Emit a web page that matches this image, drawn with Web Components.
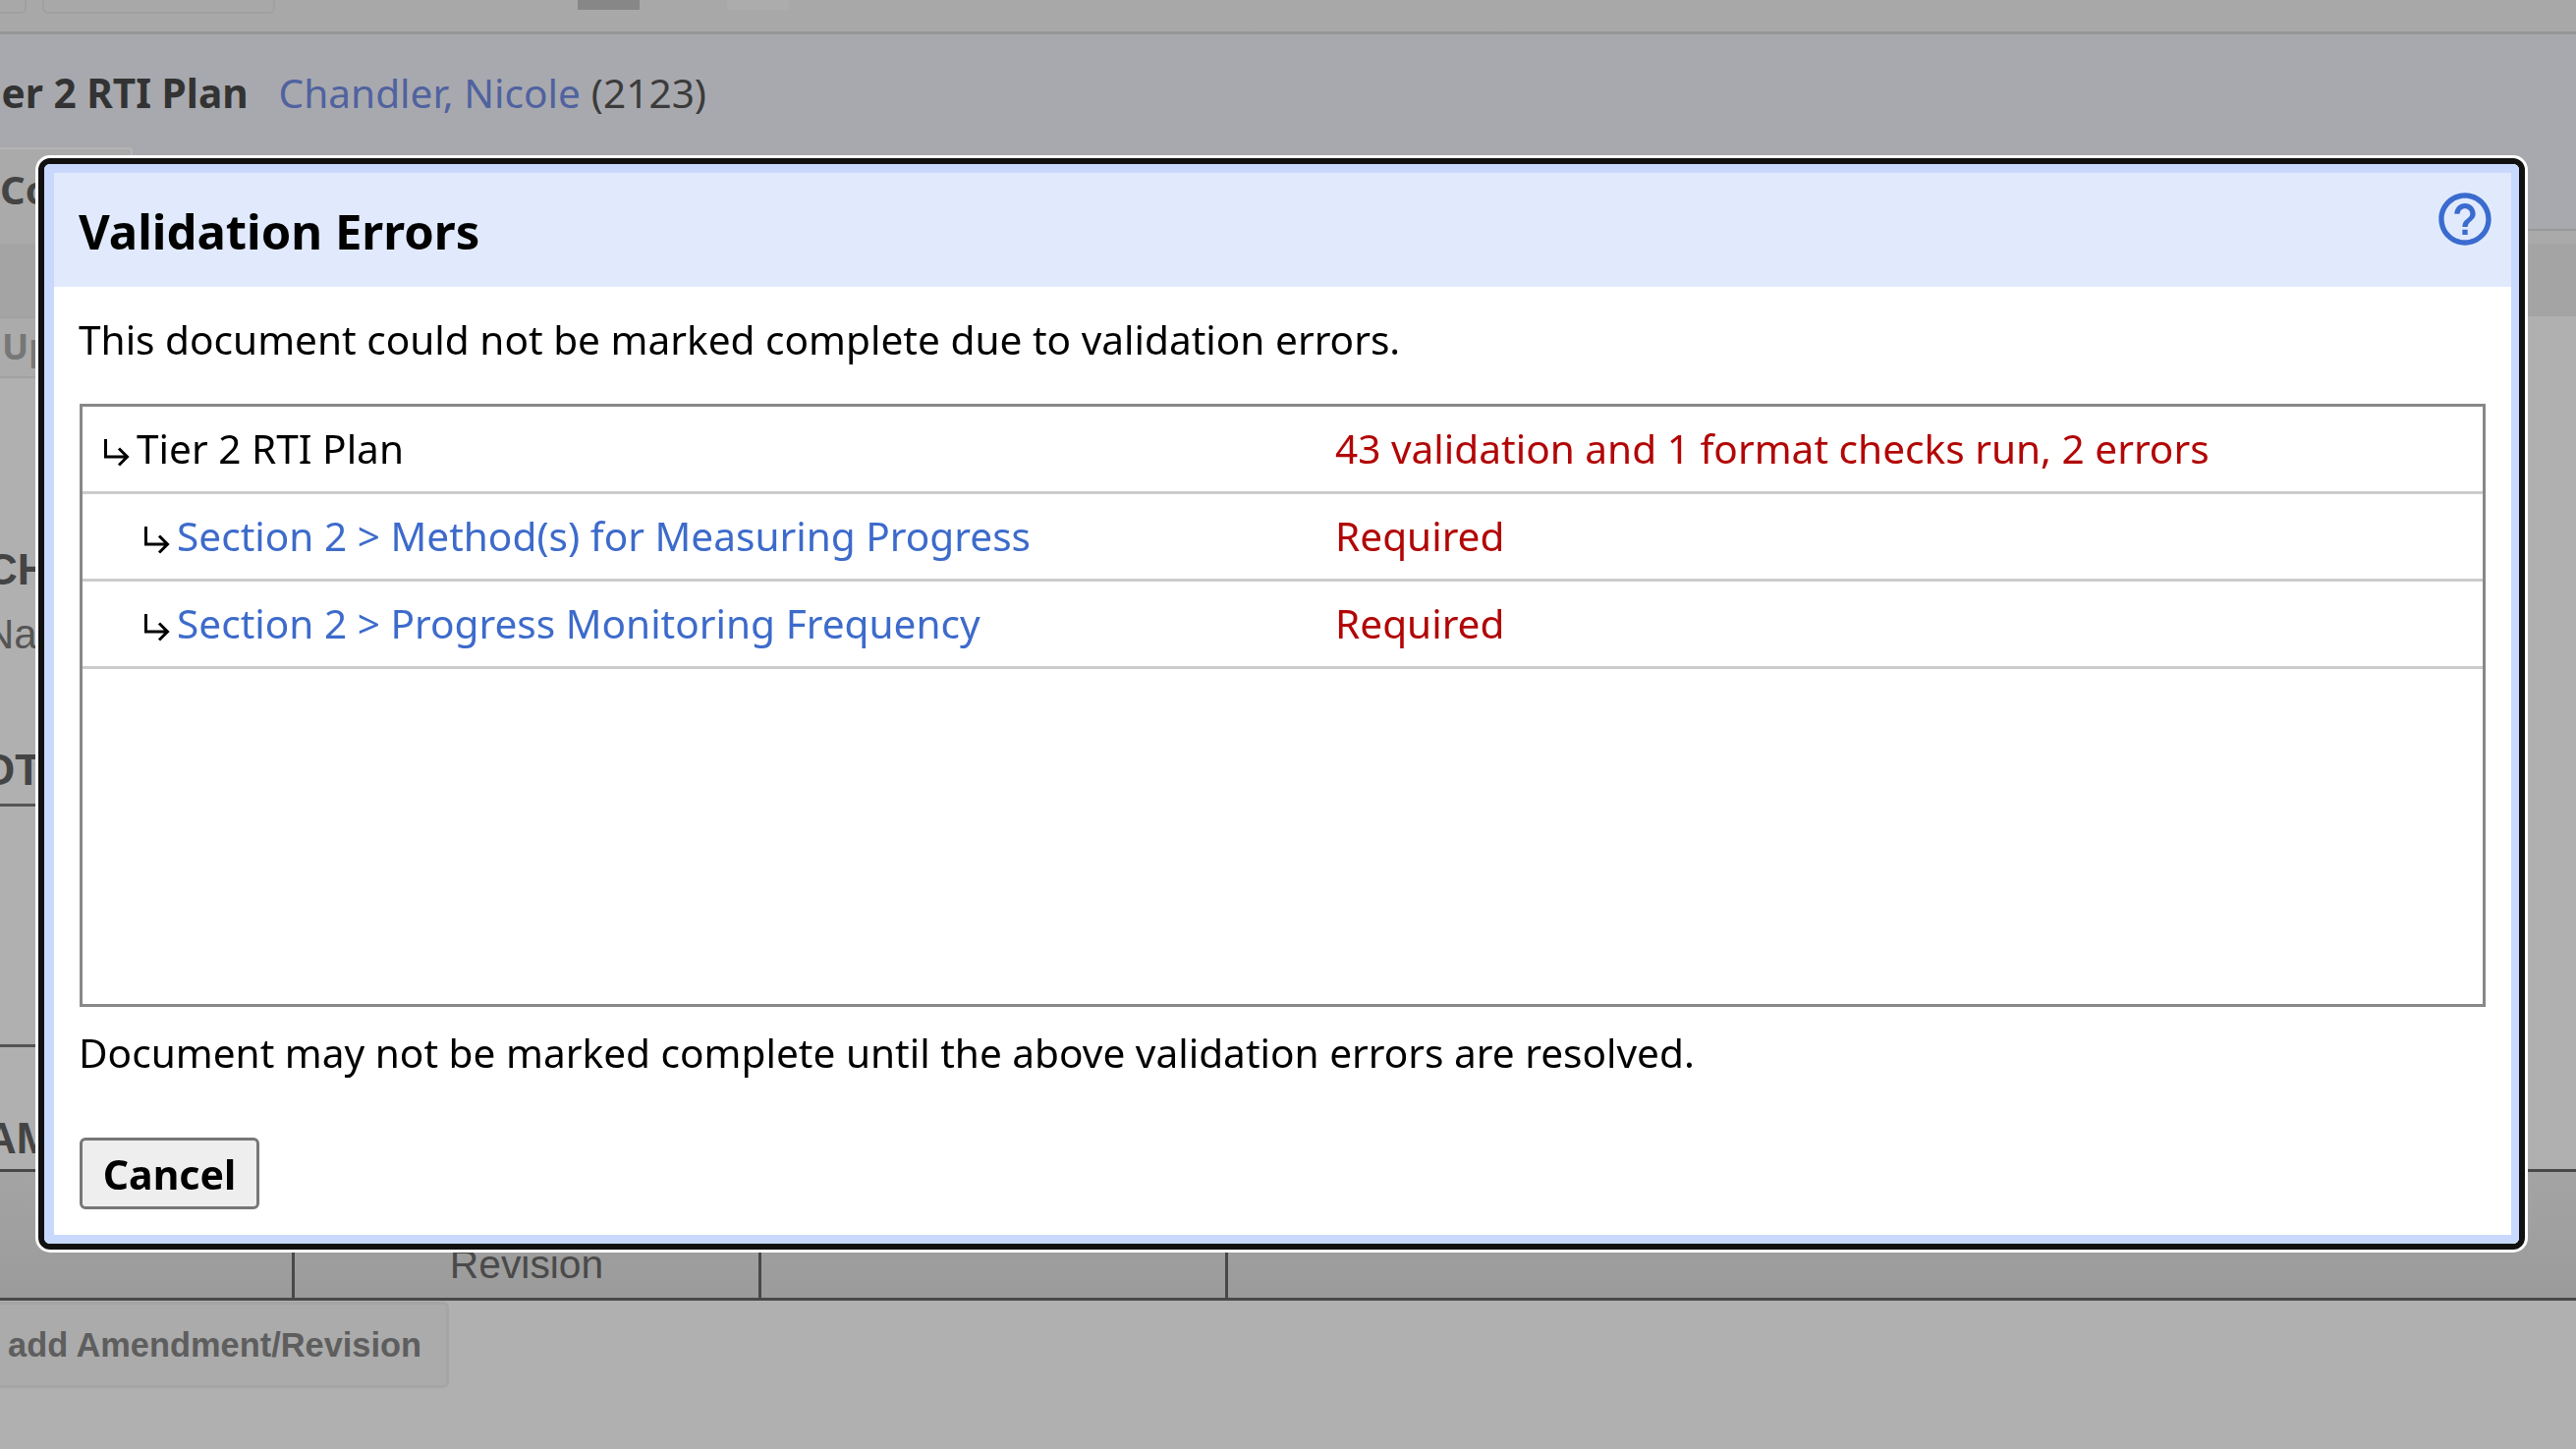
<!DOCTYPE html>
<html lang="en"><head><meta charset="utf-8"><title>Validation Errors</title>
<style>
html,body{margin:0;padding:0;width:2622px;height:1475px;overflow:hidden;background:#b0b0b0;font-family:"Noto Sans",sans-serif}
</style></head>
<body>
<app-page>
  <top-bar></top-bar>
  <student-head name="Chandler, Nicole" num="(2123)">Tier 2 RTI Plan</student-head>
  <doc-tabs></doc-tabs>
  <doc-content></doc-content>
</app-page>
<validation-dialog heading="Validation Errors">
  <span slot="intro">This document could not be marked complete due to validation errors.</span>
  <check-row level="0" status="43 validation and 1 format checks run, 2 errors">Tier 2 RTI Plan</check-row>
  <check-row level="1" link status="Required">Section 2 &gt; Method(s) for Measuring Progress</check-row>
  <check-row level="1" link status="Required">Section 2 &gt; Progress Monitoring Frequency</check-row>
  <span slot="outro">Document may not be marked complete until the above validation errors are resolved.</span>
</validation-dialog>
<script>
const el=(name,html,extra)=>customElements.define(name,class extends HTMLElement{
  constructor(){super();this.attachShadow({mode:'open'}).innerHTML=html;}
  connectedCallback(){extra&&extra(this)}
});
el('app-page',`<style>:host{display:flex;flex-direction:column;width:2622px;height:1475px;overflow:hidden;background:#b0b0b0}</style><slot></slot>`);
el('top-bar',`<style>
:host{display:flex;height:32px;background:linear-gradient(#a8a8a8,#a9a9a9);border-bottom:3px solid #969696;align-items:flex-start;position:relative;flex:none}
.b{height:14px;box-sizing:border-box;border:2px solid #a0a0a0;border-top:0;border-radius:0 0 6px 6px}
.r{height:10px}
</style>
<div class="b" style="width:27px;border-left:0;border-radius:0 0 6px 0"></div>
<div class="b" style="width:237px;margin-left:16px"></div>
<div class="r" style="width:63px;margin-left:308px;background:#878787"></div>
<div class="r" style="width:63px;margin-left:89px;background:#acacac"></div>`);
el('student-head',`<style>
:host{display:flex;box-sizing:border-box;height:198px;flex:none;background:#a8a9ae;padding-top:33px;align-items:flex-start;font:40.6px/54px "Noto Sans",sans-serif;color:#3b3b3b;white-space:nowrap;position:relative}
b{margin-left:-34px;font-weight:700;color:#333}
a{margin-left:31px;color:#50629f}
i{font-style:normal;margin-left:11px}
</style><b><slot></slot></b><a id="n"></a><i id="m"></i>`,h=>{
 h.shadowRoot.getElementById('n').textContent=h.getAttribute('name');
 h.shadowRoot.getElementById('m').textContent=h.getAttribute('num');});
el('doc-tabs',`<style>
:host{display:block;flex:none;height:87px;position:relative;background:linear-gradient(#aaa 0 13px,#a4a4a4 13px);border-top:2px solid #989898;box-sizing:content-box;font:700 40px/50px "Noto Sans",sans-serif;color:#444}
.tab{position:absolute;left:0;top:-85px;width:135px;height:98px;box-sizing:border-box;border:solid #b4b4b4;border-width:2px 2px 0 0;background:#aaa;padding:16px 0 0 0;border-radius:0 4px 0 0}
</style><div class="tab">Co</div>`);
el('doc-content',`<style>
:host{display:block;flex:1;background:#b0b0b0;font-family:"Liberation Sans",sans-serif;white-space:nowrap;color:#444;overflow:hidden}
.up{box-sizing:border-box;height:63px;width:800px;border:solid #a1a1a1;border-width:2px 0;background:#ababab;font:700 36px/58px "Noto Sans",sans-serif;color:#777;padding-left:2px}
.h{font-weight:700;font-size:44px;line-height:32px;height:32px;color:#444}
.ch{margin:179px 0 0 -14px}
.na{margin:34px 0 0 -16px;font-size:42px;font-weight:400;color:#555}
.ot{margin:107px 0 0 0;width:1000px;padding-bottom:19px;border-bottom:3px solid #555;box-sizing:content-box;height:30px;line-height:30px;text-indent:-19px}
.rule{margin-top:242px;width:1000px;border-top:3px solid #555}
.am{margin-top:78px;height:30px;line-height:30px;padding-bottom:16px;text-indent:-15px}
.t{display:grid;grid-template-columns:297px 475px 475px 1fr;height:128px;border:solid #484848;border-width:3px 0;background:linear-gradient(#a4a4a4,#9b9b9b)}
.t div{border-left:3px solid #484848;box-sizing:border-box;display:flex;align-items:flex-end;justify-content:center;font-size:40.8px;line-height:46px;padding-bottom:11px;color:#4a4a4a}
.t div:first-child{border-left:0}
.add{display:inline-block;box-sizing:border-box;margin-top:1px;height:88px;width:457px;border:3px solid #a5a5a5;border-left:0;border-radius:0 6px 6px 0;background:#ababab;font-weight:700;font-size:34.4px;line-height:82px;color:#5e5e5e;padding-left:8px}
</style>
<div class="up">Up</div>
<div class="h ch">CH</div>
<div class="h na">Na</div>
<div class="h ot">OT</div>
<div class="rule"></div>
<div class="h am">AM</div>
<div class="t"><div></div><div>Revision</div><div></div><div></div></div>
<div class="add">add Amendment/Revision</div>`);
el('validation-dialog',`<style>
:host{position:fixed;left:39px;top:161px;width:2531px;height:1111px;box-sizing:border-box;border:6.5px solid #111;border-radius:12px;box-shadow:0 0 0 3px #fff;background:#c9d9fd;font:40.6px/54px "Noto Sans",sans-serif;color:#000;display:block;overflow:hidden}
.in{box-sizing:border-box;height:100%;margin:0;border:solid #c9d9fd;border-width:9px 8px 9px 10px;background:#fff;display:flex;flex-direction:column}
header{display:flex;justify-content:space-between;height:116px;flex:none;background:#e1eafd;padding:0 15px 0 25px;box-sizing:border-box}
h1{margin:0;font-size:49px;line-height:66px;font-weight:700;padding-top:26px}
svg{margin-top:15px;display:block}
main{flex:1;display:flex;flex-direction:column;padding:27px 26px 26px 25px;min-height:0}
.tb{margin:38px 0 0 1px;height:614px;box-sizing:border-box;border:3px solid #888;flex:none}
.ou{margin-top:20px}
button{margin:59px 0 0 1px;width:183px;height:75px;box-sizing:border-box;border:3px solid #777;border-radius:6px;background:#eee;font:700 41px/54px "Noto Sans",sans-serif;color:#000;padding:0;display:block}
</style>
<div class="in">
<header><h1 id="t"></h1><svg width="64" height="64" viewBox="0 0 24 24" fill="#3a6bcf"><path d="M11 18h2v-2h-2v2zm1-16C6.48 2 2 6.48 2 12s4.48 10 10 10 10-4.48 10-10S17.52 2 12 2zm0 18c-4.41 0-8-3.59-8-8s3.59-8 8-8 8 3.59 8 8-3.59 8-8 8zm0-14c-2.21 0-4 1.79-4 4h2c0-1.1.9-2 2-2s2 .9 2 2c0 2-3 1.75-3 5h2c0-2.25 3-2.5 3-5 0-2.21-1.79-4-4-4z"/></svg></header>
<main>
<div><slot name="intro"></slot></div>
<div class="tb"><slot></slot></div>
<div class="ou"><slot name="outro"></slot></div>
<button>Cancel</button>
</main></div>`,h=>{h.shadowRoot.getElementById('t').textContent=h.getAttribute('heading')});
el('check-row',`<style>
:host{display:grid;grid-template-columns:1275px 1fr;height:89px;box-sizing:border-box;border-bottom:3px solid #ccc;align-items:center;white-space:nowrap}
.l{display:flex;align-items:center}
svg{flex:none;display:block;margin-top:6px}
.s{color:#b20606}
</style>
<div class="l" id="l"><svg width="34" height="32" viewBox="0 0 34 32" fill="none" stroke="#000" stroke-width="3"><path d="M2.5 3V21H24.5M16 12.5L24.5 21L16 29.5"/></svg><span id="x"><slot></slot></span></div>
<div class="s" id="s"></div>`,h=>{
 const r=h.shadowRoot,lv=+h.getAttribute('level');
 r.getElementById('l').style.paddingLeft=(lv?62:21)+'px';
 if(h.hasAttribute('link')){r.getElementById('x').style.color='#3d6bcb'}
 r.getElementById('s').textContent=h.getAttribute('status');});
</script>
</body></html>
